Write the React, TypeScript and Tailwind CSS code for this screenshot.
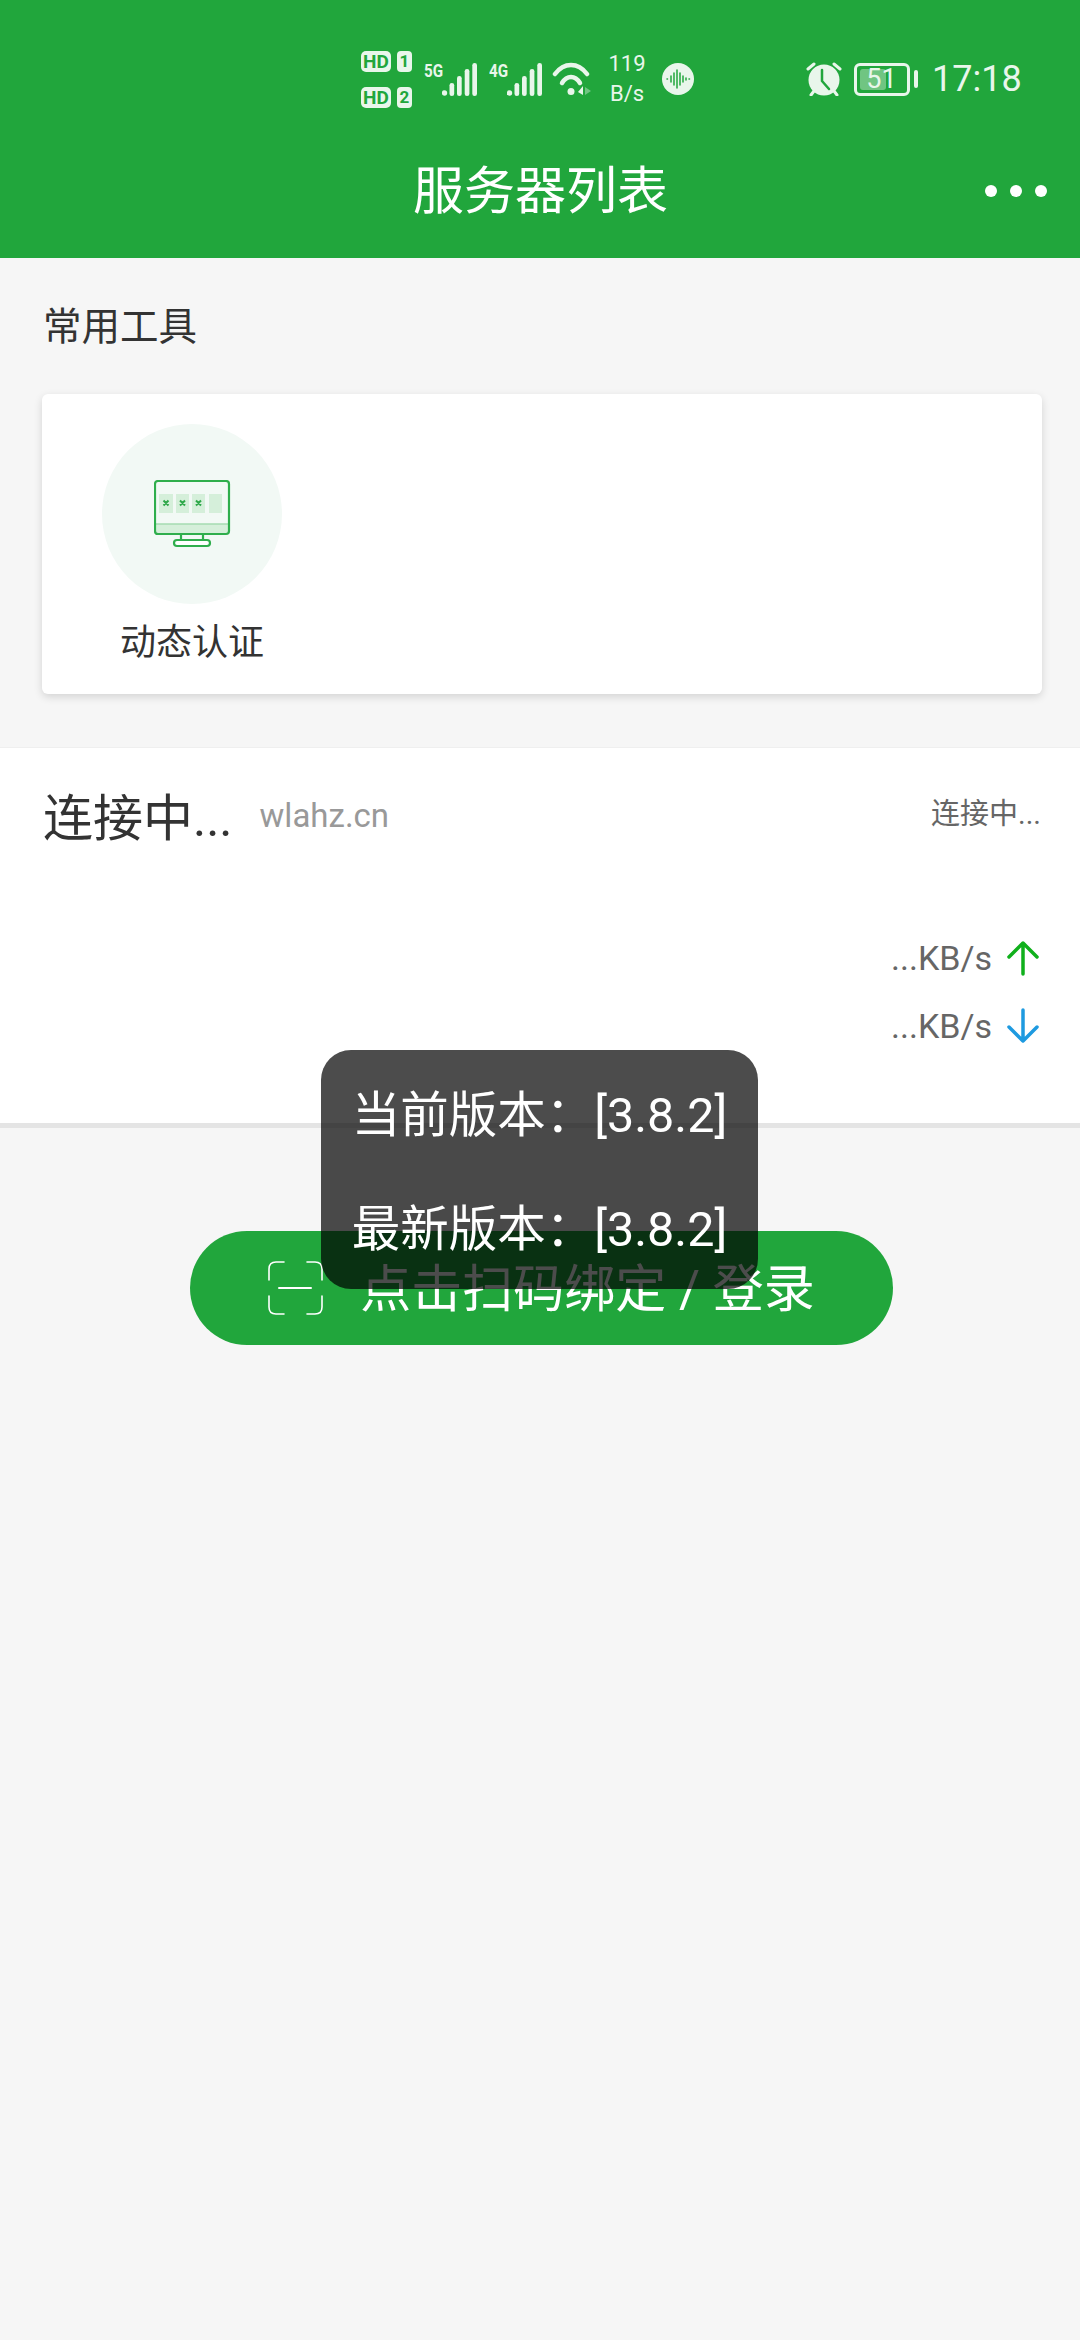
import React from "react";

const font = { fontFamily: '"Roboto","Noto Sans CJK SC",sans-serif' };

function Badge({ n }: { n: string }) {
  return (
    <div className="flex items-center gap-[6px]">
      <div className="flex h-[21px] w-[30px] items-center justify-center rounded-[5px] bg-[#e9f6eb] text-[19px] font-bold leading-none text-[#21a63c]">HD</div>
      <div className="flex h-[21px] w-[15px] items-center justify-center rounded-[4px] bg-[#e9f6eb] text-[17px] font-bold leading-none text-[#21a63c]">{n}</div>
    </div>
  );
}

function Signal({ label }: { label: string }) {
  return (
    <div className="relative h-[33px] w-[53px]">
      <span className="absolute left-0 top-0 origin-left text-[19px] font-bold leading-[16px] text-[#e9f6eb] [transform:scaleX(0.8)]">{label}</span>
      <svg className="absolute left-[18px] top-0" width="35" height="33" viewBox="0 0 35 33" fill="#e9f6eb">
        <circle cx="2.500" cy="30" r="2.700" />
        <rect x="7.500" y="20" width="4.700" height="13" rx="2.300" />
        <rect x="15" y="13" width="4.700" height="20" rx="2.300" />
        <rect x="22.700" y="6" width="4.700" height="27" rx="2.300" />
        <rect x="30.300" y="0" width="4.700" height="33" rx="2.300" />
      </svg>
    </div>
  );
}

function Wifi() {
  return (
    <svg width="40" height="34" viewBox="0 0 40 34" fill="none" stroke="#e9f6eb" strokeWidth="4.500" strokeLinecap="round">
      <path d="M3 12C12 0 26 0 35 12" />
      <path d="M10 21C15 13 23 13 28 21" />
      <circle cx="19" cy="29.500" r="3.500" fill="#e9f6eb" stroke="none" />
      <path d="M31 24v9l-5-3z" fill="#e9f6eb" stroke="none" />
      <path d="M33 25l6 4-6 4z" fill="#e9f6eb" fillOpacity="0.4" stroke="none" />
    </svg>
  );
}

function Voice() {
  return (
    <svg width="32" height="32" viewBox="0 0 32 32">
      <circle cx="16" cy="16" r="16" fill="#e9f6eb" />
      <g stroke="#21a63c" strokeWidth="1.500" strokeLinecap="round">
        <path d="M5 16h.5M9 13v6M12 10v12M15 7v18M18 10v12M21 13v6M24 15v2M27 16h.5" />
      </g>
    </svg>
  );
}

function Alarm() {
  return (
    <svg width="36" height="34" viewBox="0 0 36 34">
      <circle cx="18" cy="18" r="15.500" fill="#e9f6eb" />
      <path d="M16 8v11l7 8" fill="none" stroke="#21a63c" strokeWidth="2.500" strokeLinecap="round" strokeLinejoin="round" />
      <path d="M2 7l6-5M34 7l-6-5M5 33l3-4M31 33l-3-4" stroke="#e9f6eb" strokeWidth="3" strokeLinecap="round" />
    </svg>
  );
}

function Battery() {
  return (
    <div className="flex items-center gap-[4px]">
      <div className="relative h-[33px] w-[56px] rounded-[6px] border-[3px] border-[#e9f6eb]">
        <div className="absolute left-[3px] top-[3px] h-[21px] w-[26px] rounded-[3px] bg-[#e9f6eb]/40" />
        <span className="absolute inset-0 flex items-center justify-center pr-[1px] text-[27px] leading-none text-[#e9f6eb]">51</span>
      </div>
      <div className="h-[18px] w-[4px] rounded-[2px] bg-[#e9f6eb]" />
    </div>
  );
}

function Monitor() {
  return (
    <svg width="78" height="68" viewBox="0 0 78 68">
      <rect x="5" y="14" width="14" height="19" fill="#d5efda" />
      <rect x="22" y="14" width="13" height="19" fill="#d5efda" />
      <rect x="38" y="14" width="13" height="19" fill="#d5efda" />
      <rect x="55" y="14" width="13" height="19" fill="#d5efda" />
      <path d="M9.500 20.500l5 5M14.500 20.500l-5 5M26 20.500l5 5M31 20.500l-5 5M42 20.500l5 5M47 20.500l-5 5" stroke="#2fa84a" strokeWidth="2" />
      <rect x="1" y="44" width="74" height="10" fill="#d5efda" />
      <path d="M1 44h74" stroke="#a5dbb0" strokeWidth="1.500" />
      <rect x="1" y="1" width="74" height="53" rx="3" fill="none" stroke="#2fae4c" strokeWidth="2.200" />
      <path d="M27 54v6M49 54v6" stroke="#2fae4c" strokeWidth="2.200" />
      <rect x="20" y="60" width="36" height="6" rx="3" fill="#fff" stroke="#2fae4c" strokeWidth="2.200" />
    </svg>
  );
}

function Arrow({ color, down }: { color: string; down?: boolean }) {
  return (
    <svg width="34" height="36" viewBox="0 0 34 36" fill="none" stroke={color} strokeWidth="3.500" strokeLinecap="round" strokeLinejoin="round" className={down ? "rotate-180" : ""}>
      <path d="M17 34V3M3 17L17 3l14 14" />
    </svg>
  );
}

function Scan() {
  return (
    <svg width="55" height="54" viewBox="0 0 55 54" fill="none" stroke="#ffffff" strokeWidth="1.600" strokeLinecap="round">
      <path d="M1 19V8q0-7 7-7h8M39 1h8q7 0 7 7v11M1 35v11q0 7 7 7h8M39 53h8q7 0 7-7V35" />
      <path d="M11 27h32" strokeWidth="2" />
    </svg>
  );
}

export default function App() {
  return (
    <div className="relative h-[2340px] w-[1080px] overflow-hidden bg-[#f6f6f6]" style={font}>
      <header className="h-[258px] bg-[#21a63c]">
        <div className="flex h-[158px] items-center pl-[361px] text-[#e9f6eb]">
          <div className="flex flex-col gap-[15px]">
            <Badge n="1" />
            <Badge n="2" />
          </div>
          <div className="ml-[12px]"><Signal label="5G" /></div>
          <div className="ml-[12px]"><Signal label="4G" /></div>
          <div className="ml-[10px]"><Wifi /></div>
          <div className="ml-[15px] flex w-[40px] flex-col items-center text-[22px] leading-[30px]">
            <span>119</span>
            <span>B/s</span>
          </div>
          <div className="ml-[15px]"><Voice /></div>
          <div className="ml-[112px]"><Alarm /></div>
          <div className="ml-[12px]"><Battery /></div>
          <div className="ml-[14px] text-[36px] leading-none">17:18</div>
        </div>
        <div className="flex h-[66px] items-center justify-between pl-[413px] pr-[33px]">
          <h1 className="text-[51px] font-normal leading-none text-white">服务器列表</h1>
          <div className="flex gap-[13px]">
            <span className="h-[12px] w-[12px] rounded-full bg-white" />
            <span className="h-[12px] w-[12px] rounded-full bg-white" />
            <span className="h-[12px] w-[12px] rounded-full bg-white" />
          </div>
        </div>
      </header>

      <section className="pl-[43px] pr-[39px] pt-[46px]">
        <h2 className="text-[38.500px] font-normal leading-[46px] text-[#333]">常用工具</h2>
      </section>
      <div className="ml-[42px] mt-[44px] h-[300px] w-[1000px] rounded-[6px] bg-white pl-[60px] pt-[30px] shadow-[0_3px_8px_rgba(0,0,0,0.14)]">
        <div className="flex w-[180px] flex-col items-center">
          <div className="flex h-[180px] w-[180px] items-center justify-center rounded-full bg-[#f2f9f5]">
            <div className="pl-[2px]"><Monitor /></div>
          </div>
          <span className="mt-[16px] whitespace-nowrap text-[36px] leading-[46px] text-[#333]">动态认证</span>
        </div>
      </div>

      <section className="mt-[53px] h-[376px] border-t border-[#efefef] bg-white shadow-[0_5px_0_#e4e4e4]">
        <div className="flex items-start justify-between pl-[43px] pr-[39px] pt-[36px]">
          <div className="flex items-start">
            <span className="mt-[3px] text-[50px] leading-[64px] text-[#333]">连接中...</span>
            <span className="ml-[27px] text-[33px] leading-[64px] text-[#999]">wlahz.cn</span>
          </div>
          <span className="-mt-[2px] text-[29px] leading-[64px] text-[#666]">连接中...</span>
        </div>
        <div className="mt-[89px] flex flex-col items-end gap-[32px] pr-[40px]">
          <div className="flex h-[36px] items-center gap-[14px] text-[34px] leading-none text-[#666]">
            <span>...KB/s</span>
            <Arrow color="#10b01c" />
          </div>
          <div className="flex h-[36px] items-center gap-[14px] text-[34px] leading-none text-[#666]">
            <span>...KB/s</span>
            <Arrow color="#1e9ae0" down />
          </div>
        </div>
      </section>

      <div className="flex justify-center pl-[3px] pt-[108px]">
        <button className="flex h-[114px] w-[703px] items-center justify-center gap-[37px] rounded-full bg-[#21a63c] text-[51px] text-white">
          <Scan />
          <span className="mt-[4px] whitespace-nowrap">点击扫码绑定 / 登录</span>
        </button>
      </div>

      <div className="absolute left-[321px] top-[1050px] flex h-[239px] w-[437px] flex-col items-center justify-between rounded-[30px] bg-black/70 pb-[27px] pt-[34px] text-[48.500px] leading-[64px] text-white">
        <span className="whitespace-nowrap">当前版本：[3.8.2]</span>
        <span className="whitespace-nowrap">最新版本：[3.8.2]</span>
      </div>
    </div>
  );
}
